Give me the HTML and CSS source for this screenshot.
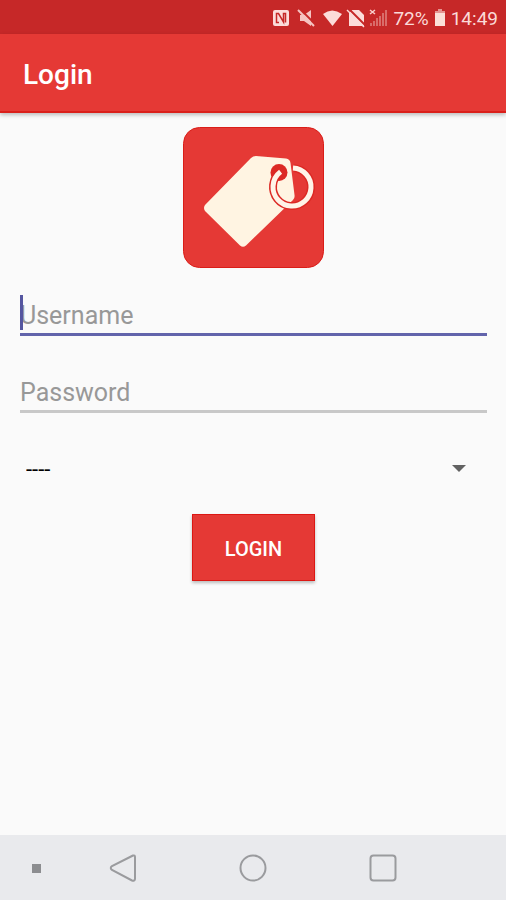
FILE: index.html
```
<!DOCTYPE html>
<html lang="en">
<head>
<meta charset="utf-8">
<meta name="viewport" content="width=device-width, initial-scale=1">
<title>Login</title>
<link rel="stylesheet" href="styles.css">
</head>
<body>
<div class="status">
  <svg class="status-icons" width="116" height="20" viewBox="0 0 116 20" aria-hidden="true">
    <rect x="1" y="2" width="16" height="16" rx="2" fill="#fcdcda"/>
    <path d="M7 14.500H4.500V5.500H6.500L11.500 14V5.500H13.500V14.500" fill="none" stroke="#c62828" stroke-width="1.500"/>
    <path d="M28 7h4l7-5v16l-7-5h-4z" fill="#f6c4c2"/>
    <path d="M28 1l16 16" stroke="#c62828" stroke-width="2"/>
    <path d="M26 2l16 16" stroke="#f6c4c2" stroke-width="2"/>
    <path d="M51 6q9-7 19 0L60.500 18z" fill="#fcdcda"/>
    <path d="M80 2h7l5 5v11H77V5z" fill="#fcdcda"/>
    <path d="M77 1l17 17" stroke="#c62828" stroke-width="2"/>
    <path d="M75 2l17 17" stroke="#fcdcda" stroke-width="1.500"/>
    <path d="M98 2l5 4M103 2l-5 4" stroke="#f8cecc" stroke-width="1.500"/>
    <path d="M99 18v-3M102 18v-5M105 18v-8M108 18v-10M111 18v-13M114 18v-16" stroke="#df8280" stroke-width="1.500"/>
  </svg>
  <span>72%</span>
  <svg class="battery" width="12" height="20" viewBox="0 0 12 20" aria-hidden="true">
    <path d="M4 1h4v2h3v15H1V3h3z" fill="#fbe0d8"/>
    <path d="M4 1h4v2h3v2H1V3h3z" fill="#e59592"/>
  </svg>
  <time>14:49</time>
</div>
<header class="appbar"><h1>Login</h1></header>
<main>
  <svg class="logo" viewBox="0 0 141 141" role="img" aria-label="Price tag">
    <rect x=".5" y=".5" width="140" height="140" rx="16" fill="#e53935" stroke="#da1d18"/>
    <path d="M73 29L103 31.500Q107 32 107.500 36L111.500 68Q112 71 110 73L63 118.500Q60 121 57 118.500L22 84Q20 81 22 78L68 31Q70 29 73 29z" fill="#fff4e2"/>
    <circle cx="96" cy="45.500" r="8.500" fill="#dc2924"/>
    <circle cx="109" cy="60" r="19" pathLength="360" stroke-dasharray="312 48" transform="rotate(-84 109 60)" fill="none" stroke="#dc2924" stroke-width="8"/>
    <circle cx="109" cy="60" r="19" pathLength="360" stroke-dasharray="320 40" transform="rotate(-87 109 60)" fill="none" stroke="#fff4e8" stroke-width="5"/>
  </svg>
  <form>
    <div class="field focused">
      <input type="text" aria-label="Username" placeholder="Username">
      <span class="caret"></span>
    </div>
    <div class="field">
      <input type="password" aria-label="Password" placeholder="Password">
    </div>
    <div class="picker">
      <select aria-label="Account"><option>----</option></select>
      <svg width="14" height="8" viewBox="0 0 14 8" aria-hidden="true"><path d="M0 0h14L7 7z" fill="#626262"/></svg>
    </div>
    <button class="submit" type="button">LOGIN</button>
  </form>
</main>
<nav class="navbar">
  <button type="button" aria-label="Hide bar"><svg viewBox="0 0 30 30"><path d="M11 11h9v9h-9z" fill="#8c8d90"/></svg></button>
  <button type="button" aria-label="Back"><svg viewBox="0 0 30 30"><path d="M25 2.500L4 13Q1.500 15 4 17L24 27.500Q26.500 28.500 27 26V4Q27 2 25 2.500z"/></svg></button>
  <button type="button" aria-label="Home"><svg viewBox="0 0 30 30"><circle cx="15" cy="15" r="12.500"/></svg></button>
  <button type="button" aria-label="Recent apps"><svg viewBox="0 0 30 30"><rect x="2.500" y="2.500" width="25" height="25" rx="3"/></svg></button>
</nav>
</body>
</html>
```
FILE: styles.css
```
* { box-sizing: border-box; }
body {
  margin: 0;
  min-height: 100vh;
  display: flex;
  flex-direction: column;
  background: #fafafa;
  font-family: Roboto, "Liberation Sans", sans-serif;
}
.status {
  height: 34px;
  padding: 2px 8px 0;
  display: flex;
  align-items: center;
  justify-content: flex-end;
  gap: 5px;
  background: #c62828;
  color: #fbdad8;
  font-size: 19px;
}
.status-icons, .battery { flex: none; }
.appbar {
  height: 79px;
  padding: 4px 23px 0;
  display: flex;
  align-items: center;
  background: #e53935;
  border-bottom: 2px solid #da1f1a;
  box-shadow: 0 2px 4px rgba(0, 0, 0, .25);
  color: #fff;
}
h1 { margin: 0; font-size: 28px; line-height: 32px; font-weight: 500; }
main {
  flex: 1;
  padding: 14px 19px 14px 20px;
  display: flex;
  flex-direction: column;
  align-items: center;
}
.logo { width: 141px; height: 141px; }
form {
  width: 100%;
  margin-top: 22px;
  display: flex;
  flex-direction: column;
  align-items: center;
}
.field { position: relative; width: 100%; margin-bottom: 31px; }
.field input {
  display: block;
  width: 100%;
  height: 46px;
  padding: 8px 0 0;
  border: 0;
  border-bottom: 3px solid #c8c8c8;
  background: none;
  outline: none;
  color: #212121;
  font: 25px/32px Roboto, "Liberation Sans", sans-serif;
}
.field input::placeholder { color: #989898; opacity: 1; }
.focused input { border-color: #6264ab; }
.caret {
  position: absolute;
  left: 0;
  top: 5px;
  width: 3px;
  height: 35px;
  background: #5556a0;
}
.picker {
  width: 100%;
  padding: 0 21px 0 6px;
  display: grid;
  align-items: center;
}
.picker select, .picker svg { grid-area: 1 / 1; }
.picker svg { justify-self: end; pointer-events: none; }
.picker select {
  width: 100%;
  height: 50px;
  padding: 2px 0 0;
  border: 0;
  appearance: none;
  background: none;
  color: #000;
  font: 22px/28px Roboto, "Liberation Sans", sans-serif;
}
.submit {
  min-width: 123px;
  height: 67px;
  margin-top: 20px;
  padding: 2px 32px 0;
  border: 1px solid #dc1713;
  background: #e53935;
  box-shadow: 0 2px 3px rgba(0, 0, 0, .25);
  color: #fff;
  font: 500 20px/24px Roboto, "Liberation Sans", sans-serif;
}
.navbar {
  height: 65px;
  display: grid;
  grid-template-columns: 58px 1fr 1fr 1fr 58px;
  align-items: center;
  background: #e9eaed;
}
.navbar button {
  display: grid;
  justify-items: center;
  padding: 0;
  border: 0;
  background: none;
}
.navbar button:first-child { padding-left: 14px; }
.navbar svg { width: 30px; height: 30px; fill: none; stroke: #9a9b9e; stroke-width: 2; }
.navbar button:first-child svg { stroke: none; }
```
